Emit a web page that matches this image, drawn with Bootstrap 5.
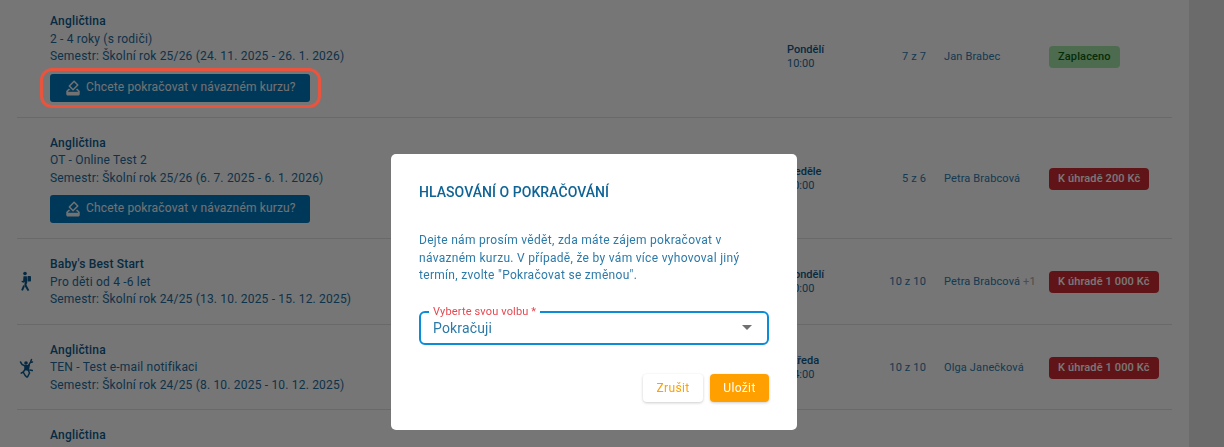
<!DOCTYPE html>
<html lang="cs">
<head>
    <meta charset="UTF-8">
    <title>Hlasování o pokračování</title>
    <meta name="viewport" content="width=device-width, initial-scale=1">
    <link href="https://cdn.jsdelivr.net/npm/bootstrap@5.3.3/dist/css/bootstrap.min.css" rel="stylesheet">
    <style>
        html, body { height: 447px; overflow: hidden; }
        body { background: #d6d6d6; font-family: Roboto, "Liberation Sans", sans-serif; font-size: 12px; color: #1b6593; }
        .page-main { width: 1189px; height: 447px; background: #ececec; padding: 0 17px; overflow: hidden; }
        .course-list { margin-top: -4px; }
        .course-row { border-bottom: 1px solid #d2d2d2; padding: 17px 0 15px; }
        .course-icon { width: 33px; padding-left: 2px; color: #0b5585; }
        .course-info { width: 737px; line-height: 17.5px; letter-spacing: .19px; }
        .course-title { font-weight: 500; color: #0b5585; }
        .vote-wrap { position: relative; display: inline-block; margin-top: 8px; vertical-align: top; }
        .vote-btn { width: 260px; height: 28px; padding: 0 0 0 14px; background: #0071b5; border: 0; border-radius: 3px; color: #e4e4e4; font-size: 12px; letter-spacing: .16px; }
        .vote-btn svg { width: 18px; height: 18px; margin-right: 4px; }
        .red-frame { position: absolute; inset: -6px -11px -6px -10px; border: 3px solid #e9543f; border-radius: 12px; z-index: 1060; }
        .day-col { width: 100px; font-size: 11px; line-height: 14px; }
        .day-name { font-weight: 500; color: #0b5585; }
        .count-col { width: 39px; font-size: 11px; letter-spacing: .15px; text-align: right; white-space: nowrap; color: #2a74a3; }
        .teacher-col { width: 105px; margin-left: 18px; font-size: 11px; letter-spacing: .14px; white-space: nowrap; color: #2a74a3; }
        .teacher-more { color: #9a9a9a; }
        .pay-badge { display: inline-block; height: 22px; line-height: 22px; padding: 0 9px; border-radius: 4px; font-size: 11px; font-weight: 500; letter-spacing: .13px; white-space: nowrap; }
        .pay-ok { background: #9ad69d; color: #0a5a10; }
        .pay-due { background: #c22830; color: #f2f2f2; }
        .vote-modal { width: 1188px; overflow: hidden; }
        .vote-modal .modal-dialog { max-width: 406px; margin: 154px auto 0; }
        .vote-modal .modal-content { height: 276px; border: 0; border-radius: 5px; padding: 29px 28px 28px; color: #2c7aa8; }
        .vote-heading { font-size: 14px; font-weight: 500; color: #0f6496; line-height: 18px; margin: 0 0 31px; letter-spacing: .05px; text-transform: uppercase; }
        .vote-text { font-size: 12px; line-height: 17.5px; letter-spacing: .3px; margin: 0 0 26px; }
        .vote-select { position: relative; height: 34px; border: 2px solid #0a8cd8; border-radius: 6px; padding-left: 12px; font-size: 14px; letter-spacing: .15px; line-height: 31px; }
        .vote-label { position: absolute; left: 8px; top: -7px; padding: 0 4px; background: #fff; color: #e8474f; font-size: 11px; line-height: 12px; letter-spacing: .15px; }
        .vote-arrow { position: absolute; right: 15px; top: 12px; border: 5px solid transparent; border-top-color: #707070; border-bottom: 0; }
        .vote-actions { margin-top: 29px; gap: 7px; }
        .btn-cancel, .btn-save { height: 28px; padding: 0; font-size: 12px; letter-spacing: .35px; border: 0; border-radius: 4px; }
        .btn-cancel { width: 60px; background: #fff; color: #ffa000; box-shadow: 0 1px 3px rgba(0,0,0,.2); }
        .btn-save { width: 59px; background: #ffa000; color: #fff; box-shadow: 0 1px 3px rgba(0,0,0,.2); }
    </style>
</head>
<body>
    <div class="page-main">
        <div class="course-list">
            <div class="course-row d-flex align-items-center">
                <div class="course-icon"></div>
                <div class="course-info">
                    <div class="course-title">Angličtina</div>
                    <div>2 - 4 roky (s rodiči)</div>
                    <div>Semestr: Školní rok 25/26 (24. 11. 2025 - 26. 1. 2026)</div>
                    <div class="vote-wrap">
                        <button class="vote-btn d-flex align-items-center" type="button">
                            <svg viewBox="0 0 24 24" fill="currentColor"><path d="M18 13h-.68l-2 2h1.91L19 17H5l1.78-2h2.05l-2-2H6l-3 3v4c0 1.1.89 2 1.99 2H19c1.1 0 2-.89 2-2v-4l-3-3zm-1-5.05l-4.95 4.95-3.54-3.54 4.95-4.95L17 7.95zm-4.24-5.66L6.39 8.66c-.39.39-.39 1.02 0 1.41l4.95 4.95c.39.39 1.02.39 1.41 0l6.36-6.36c.39-.39.39-1.02 0-1.41L14.16 2.3c-.38-.4-1.01-.4-1.4-.01z"/></svg>
                            Chcete pokračovat v návazném kurzu?
                        </button>
                        <div class="red-frame"></div>
                    </div>
                </div>
                <div class="day-col"><div class="day-name">Pondělí</div><div>10:00</div></div>
                <div class="count-col">7 z 7</div>
                <div class="teacher-col">Jan Brabec</div>
                <div><span class="pay-badge pay-ok">Zaplaceno</span></div>
            </div>
            <div class="course-row d-flex align-items-center">
                <div class="course-icon"></div>
                <div class="course-info">
                    <div class="course-title">Angličtina</div>
                    <div>OT - Online Test 2</div>
                    <div>Semestr: Školní rok 25/26 (6. 7. 2025 - 6. 1. 2026)</div>
                    <div class="vote-wrap">
                        <button class="vote-btn d-flex align-items-center" type="button">
                            <svg viewBox="0 0 24 24" fill="currentColor"><path d="M18 13h-.68l-2 2h1.91L19 17H5l1.78-2h2.05l-2-2H6l-3 3v4c0 1.1.89 2 1.99 2H19c1.1 0 2-.89 2-2v-4l-3-3zm-1-5.05l-4.95 4.95-3.54-3.54 4.95-4.95L17 7.95zm-4.24-5.66L6.39 8.66c-.39.39-.39 1.02 0 1.41l4.95 4.95c.39.39 1.02.39 1.41 0l6.36-6.36c.39-.39.39-1.02 0-1.41L14.16 2.3c-.38-.4-1.01-.4-1.4-.01z"/></svg>
                            Chcete pokračovat v návazném kurzu?
                        </button>
                    </div>
                </div>
                <div class="day-col"><div class="day-name">Neděle</div><div>10:00</div></div>
                <div class="count-col">5 z 6</div>
                <div class="teacher-col">Petra Brabcová</div>
                <div><span class="pay-badge pay-due">K úhradě 200 Kč</span></div>
            </div>
            <div class="course-row d-flex align-items-center">
                <div class="course-icon">
                    <svg width="14" height="24" viewBox="0 0 14 24" fill="currentColor"><circle cx="6" cy="3.500" r="1.800"/><rect x="8.500" y="6" width="3.500" height="5.500" rx=".8"/><path d="M4.500 6.200h3.300l.5 6.300-.9 2.300 2.900 5.500-1.700.7-3.300-5.500.5-3.800-1 1-2.300-.7.300-1.300 1.300.4z"/><path d="M4.300 15l1.500 1.400-1.900 4.300-1.700-.7z"/></svg>
                </div>
                <div class="course-info">
                    <div class="course-title">Baby's Best Start</div>
                    <div>Pro děti od 4 -6 let</div>
                    <div>Semestr: Školní rok 24/25 (13. 10. 2025 - 15. 12. 2025)</div>
                </div>
                <div class="day-col"><div class="day-name">Pondělí</div><div>10:00</div></div>
                <div class="count-col">10 z 10</div>
                <div class="teacher-col">Petra Brabcová <span class="teacher-more">+1</span></div>
                <div><span class="pay-badge pay-due">K úhradě 1 000 Kč</span></div>
            </div>
            <div class="course-row d-flex align-items-center">
                <div class="course-icon">
                    <svg width="16" height="24" viewBox="0 0 16 24" fill="none" stroke="currentColor" stroke-width="1.500" stroke-linecap="round"><circle cx="7" cy="7" r="1.800" fill="currentColor" stroke="none"/><path d="M1.500 6l1.500 2.500 3 1.500 3.500-.5 2-3.500 1-2.500M11.500 6.500l2-.5"/><path d="M6 9.500v4l3.200.5 1-5" fill="currentColor"/><path d="M6 13.500l-1.800 2.500 2 3.500 1.500 1.500M9.200 14l1.300 3-2 4M4.200 16l-2 1.200M10.800 14l2.500 .5"/></svg>
                </div>
                <div class="course-info">
                    <div class="course-title">Angličtina</div>
                    <div>TEN - Test e-mail notifikaci</div>
                    <div>Semestr: Školní rok 24/25 (8. 10. 2025 - 10. 12. 2025)</div>
                </div>
                <div class="day-col"><div class="day-name">Středa</div><div>14:00</div></div>
                <div class="count-col">10 z 10</div>
                <div class="teacher-col">Olga Janečková</div>
                <div><span class="pay-badge pay-due">K úhradě 1 000 Kč</span></div>
            </div>
            <div class="course-row d-flex align-items-center">
                <div class="course-icon"></div>
                <div class="course-info">
                    <div class="course-title">Angličtina</div>
                </div>
            </div>
        </div>
    </div>

    <div class="modal-backdrop show"></div>
    <div class="modal vote-modal d-block">
        <div class="modal-dialog">
            <div class="modal-content">
                <h5 class="vote-heading">Hlasování o pokračování</h5>
                <p class="vote-text">Dejte nám prosím vědět, zda máte zájem pokračovat v návazném kurzu. V případě, že by vám více vyhovoval jiný termín, zvolte "Pokračovat se změnou".</p>
                <div class="vote-select">
                    <span class="vote-label">Vyberte svou volbu *</span>
                    Pokračuji
                    <span class="vote-arrow"></span>
                </div>
                <div class="vote-actions d-flex justify-content-end">
                    <button class="btn-cancel" type="button">Zrušit</button>
                    <button class="btn-save" type="button">Uložit</button>
                </div>
            </div>
        </div>
    </div>
    <script src="https://cdn.jsdelivr.net/npm/bootstrap@5.3.3/dist/js/bootstrap.bundle.min.js"></script>
</body>
</html>
